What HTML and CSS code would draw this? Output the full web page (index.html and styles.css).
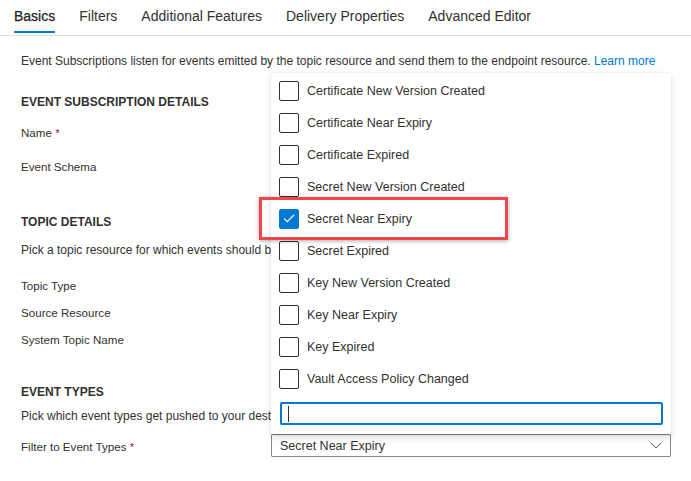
FILE: index.html
```html
<!DOCTYPE html>
<html lang="en">
<head>
<meta charset="utf-8">
<title>Event Subscription</title>
<link rel="stylesheet" href="styles.css">
</head>
<body>
<nav class="tabs">
  <span class="tab active">Basics</span>
  <span class="tab">Filters</span>
  <span class="tab">Additional Features</span>
  <span class="tab">Delivery Properties</span>
  <span class="tab">Advanced Editor</span>
</nav>
<main class="content">
  <p class="desc">Event Subscriptions listen for events emitted by the topic resource and send them to the endpoint resource. <a class="link">Learn more</a></p>

  <h2 class="section sec-1">EVENT SUBSCRIPTION DETAILS</h2>
  <div class="label l-name">Name <span class="req">*</span></div>
  <div class="label l-schema">Event Schema</div>

  <h2 class="section sec-2">TOPIC DETAILS</h2>
  <div class="label hint l-pick">Pick a topic resource for which events should be pushed to your destination.</div>
  <div class="label l-type">Topic Type</div>
  <div class="label l-tight">Source Resource</div>
  <div class="label l-tight">System Topic Name</div>

  <h2 class="section sec-3">EVENT TYPES</h2>
  <div class="label hint l-pick2">Pick which event types get pushed to your destination.</div>

  <div class="filter-row">
    <div class="filter-label">Filter to Event Types <span class="req">*</span></div>
    <div class="select-wrap">
      <div class="select">
        <span>Secret Near Expiry</span>
        <svg class="chev" width="12" height="7" viewBox="0 0 12 7"><path d="M0.5 0.5 L6 6 L11.5 0.5" fill="none" stroke="#605e5c" stroke-width="1"/></svg>
      </div>
      <div class="dropdown">
        <ul class="options">
          <li class="opt"><span class="box"></span>Certificate New Version Created</li>
          <li class="opt"><span class="box"></span>Certificate Near Expiry</li>
          <li class="opt"><span class="box"></span>Certificate Expired</li>
          <li class="opt"><span class="box"></span>Secret New Version Created</li>
          <li class="opt"><span class="box checked"><svg width="12" height="9" viewBox="0 0 12 9"><path d="M1 4.5 L4.2 7.7 L11 1" fill="none" stroke="#fff" stroke-width="1.1"/></svg></span>Secret Near Expiry</li>
          <li class="opt"><span class="box"></span>Secret Expired</li>
          <li class="opt"><span class="box"></span>Key New Version Created</li>
          <li class="opt"><span class="box"></span>Key Near Expiry</li>
          <li class="opt"><span class="box"></span>Key Expired</li>
          <li class="opt"><span class="box"></span>Vault Access Policy Changed</li>
        </ul>
        <div class="search"><span class="caret"></span></div>
        <div class="highlight"></div>
      </div>
    </div>
  </div>
</main>
</body>
</html>
```

FILE: styles.css
```css
* { box-sizing: border-box; }
html, body { margin: 0; padding: 0; background: #fff; }
body {
  font-family: "Liberation Sans", Arial, sans-serif;
  color: #323130;
  font-size: 12px;
  width: 691px;
  height: 481px;
  overflow: hidden;
}
.tabs {
  display: flex;
  height: 36px;
  border-bottom: 1px solid #e1dfdd;
  padding-left: 14px;
  gap: 24px;
}
.tab {
  font-size: 14px;
  line-height: 20px;
  padding-top: 6px;
  height: 33px;
  color: #323130;
}
.tab.active {
  border-bottom: 2px solid #0078d4;
  color: #201f1e;
  -webkit-text-stroke: 0.25px #201f1e;
}
.content { padding-left: 21px; }
.desc { margin: 17px 0 0; line-height: 16px; white-space: nowrap; }
.link { color: #0078d4; text-decoration: none; }
.section {
  font-size: 12px;
  font-weight: 700;
  line-height: 18px;
  margin: 0;
  color: #323130;
}
.sec-1 { margin-top: 24px; }
.sec-2 { margin-top: 38px; }
.sec-3 { margin-top: 35px; }
.label {
  font-size: 11.6px;
  line-height: 16px;
  white-space: nowrap;
  width: 250px;
  overflow: hidden;
}
.label.hint { font-size: 12px; }
.l-name { margin-top: 14px; }
.l-schema { margin-top: 18px; }
.l-pick { margin-top: 11px; }
.l-type { margin-top: 20px; }
.l-tight { margin-top: 11px; }
.l-pick2 { margin-top: 7px; }
.req { color: #a4262c; }

.filter-row {
  display: flex;
  align-items: center;
  margin-top: 10px;
}
.filter-label { width: 250px; font-size: 11.6px; line-height: 16px; padding-top: 3px; }
.select-wrap { position: relative; }
.select {
  width: 400px;
  height: 23px;
  border: 1px solid #8a8886;
  border-radius: 1px;
  display: flex;
  align-items: center;
  justify-content: space-between;
  padding: 0 8px 0 8px;
  font-size: 12.5px;
}

.dropdown {
  position: absolute;
  left: 0;
  bottom: 100%;
  width: 400px;
  height: 361px;
  background: #fff;
  border-radius: 2px;
  box-shadow: 0 3.2px 7.2px rgba(0,0,0,0.13), 0 0.6px 1.8px rgba(0,0,0,0.11);
  padding-top: 1px;
}
.options { list-style: none; margin: 0; padding: 0; }
.opt {
  height: 32px;
  display: flex;
  align-items: center;
  padding-left: 8px;
  padding-top: 1px;
  font-size: 12.5px;
  color: #323130;
}
.box {
  width: 20px;
  height: 20px;
  border: 1px solid #323130;
  border-radius: 2px;
  margin-right: 8px;
  flex: none;
  display: flex;
  align-items: center;
  justify-content: center;
}
.box.checked { background: #0078d4; border-color: #0078d4; }
.search {
  margin: 8px 0 0 9px;
  width: 383px;
  height: 23px;
  border: 2px solid #0078d4;
  border-radius: 2px;
  display: flex;
  align-items: center;
  padding-left: 6px;
}
.caret { width: 1px; height: 16px; background: #323130; }
.highlight {
  position: absolute;
  left: -12px;
  top: 124px;
  width: 249px;
  height: 43px;
  border: 3px solid #f0464b;
  box-shadow: 0 1px 4px rgba(0,0,0,0.35);
}
```
